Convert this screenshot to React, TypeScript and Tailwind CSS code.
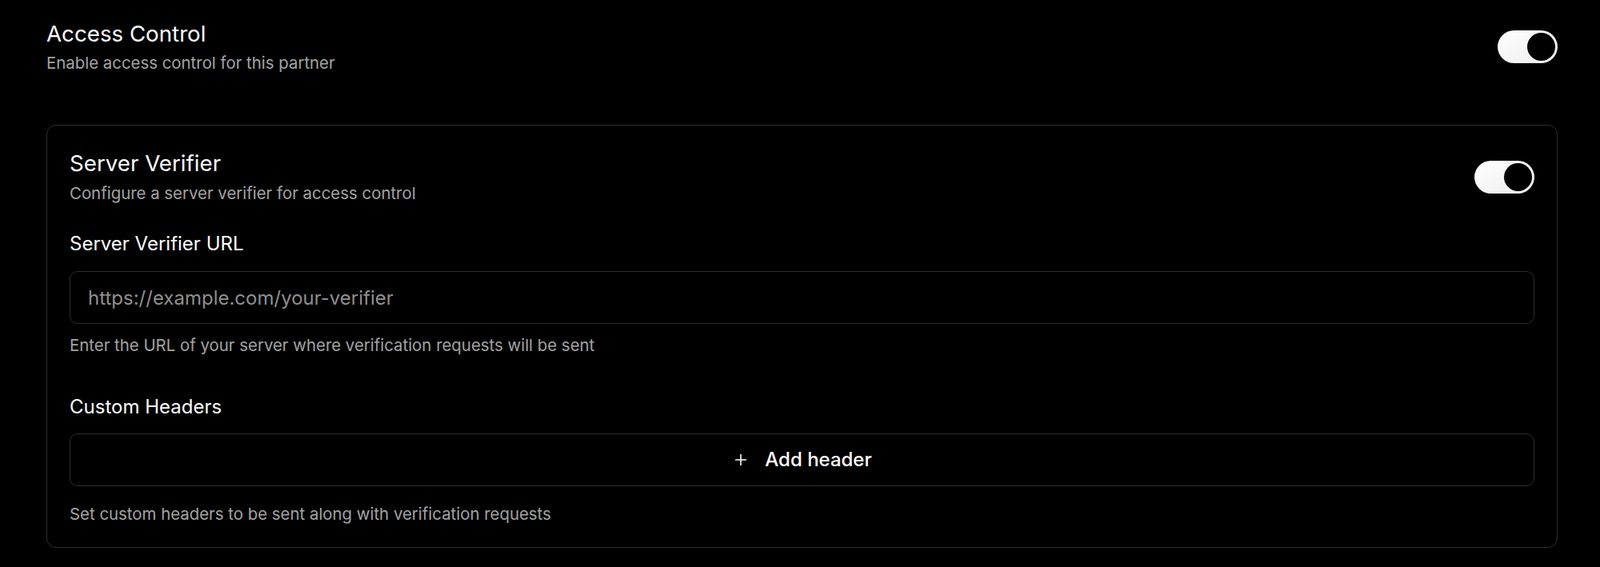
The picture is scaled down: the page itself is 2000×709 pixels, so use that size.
import { useState } from "react";
import { Plus } from "lucide-react";

function Toggle({ checked, onChange }: { checked: boolean; onChange: (v: boolean) => void }) {
  return (
    <button
      type="button"
      role="switch"
      aria-checked={checked}
      onClick={() => onChange(!checked)}
      className={`relative flex h-[41px] w-[75px] shrink-0 items-center rounded-full p-[3px] ${
        checked ? "justify-end bg-gradient-to-br from-white to-[#ececec]" : "justify-start bg-[#3a3a3a]"
      }`}
    >
      <span className="block h-[35px] w-[35px] rounded-full bg-black" />
    </button>
  );
}

export default function App() {
  const [accessControl, setAccessControl] = useState(true);
  const [serverVerifier, setServerVerifier] = useState(true);
  const [url, setUrl] = useState("");

  return (
    <div className="min-h-[709px] bg-black pl-[58px] pr-[53px] pt-[24px] font-['Inter',sans-serif] text-white">
      <div className="flex items-center justify-between">
        <div>
          <h2 className="text-[27.7px] leading-[36px] font-normal">Access Control</h2>
          <p className="mt-[5px] text-[20.4px] leading-[28px] text-[#a3a3a3]">
            Enable access control for this partner
          </p>
        </div>
        <Toggle checked={accessControl} onChange={setAccessControl} />
      </div>

      <div className="mt-[63px] rounded-[12px] border border-[#2e2e2e] px-[28px] pt-[29px] pb-[27px]">
        <div className="flex items-center justify-between">
          <div>
            <h3 className="text-[27.7px] leading-[36px] font-normal">Server Verifier</h3>
            <p className="mt-[6px] text-[20.4px] leading-[28px] text-[#a3a3a3]">
              Configure a server verifier for access control
            </p>
          </div>
          <Toggle checked={serverVerifier} onChange={setServerVerifier} />
        </div>

        <label htmlFor="verifier-url" className="mt-[34px] block text-[24px] leading-[30px] font-normal">
          Server Verifier URL
        </label>
        <input
          id="verifier-url"
          type="text"
          value={url}
          onChange={(e) => setUrl(e.target.value)}
          placeholder="https://example.com/your-verifier"
          className="mt-[19px] block h-[66px] w-full rounded-[10px] border border-[#2e2e2e] bg-black px-[22px] text-[24px] text-white placeholder:text-[#8f8f8f] outline-none"
        />
        <p className="mt-[13px] text-[20.4px] leading-[28px] text-[#a3a3a3]">
          Enter the URL of your server where verification requests will be sent
        </p>

        <div className="mt-[48px] text-[24px] leading-[30px] font-normal">Custom Headers</div>
        <button
          type="button"
          className="mt-[18px] flex h-[66px] w-full items-center justify-center gap-[19px] rounded-[10px] border border-[#2e2e2e] bg-black text-[24px] font-medium text-white"
        >
          <Plus className="h-[22px] w-[22px]" strokeWidth={1.75} />
          Add header
        </button>
        <p className="mt-[21px] text-[20.4px] leading-[28px] text-[#a3a3a3]">
          Set custom headers to be sent along with verification requests
        </p>
      </div>
    </div>
  );
}
